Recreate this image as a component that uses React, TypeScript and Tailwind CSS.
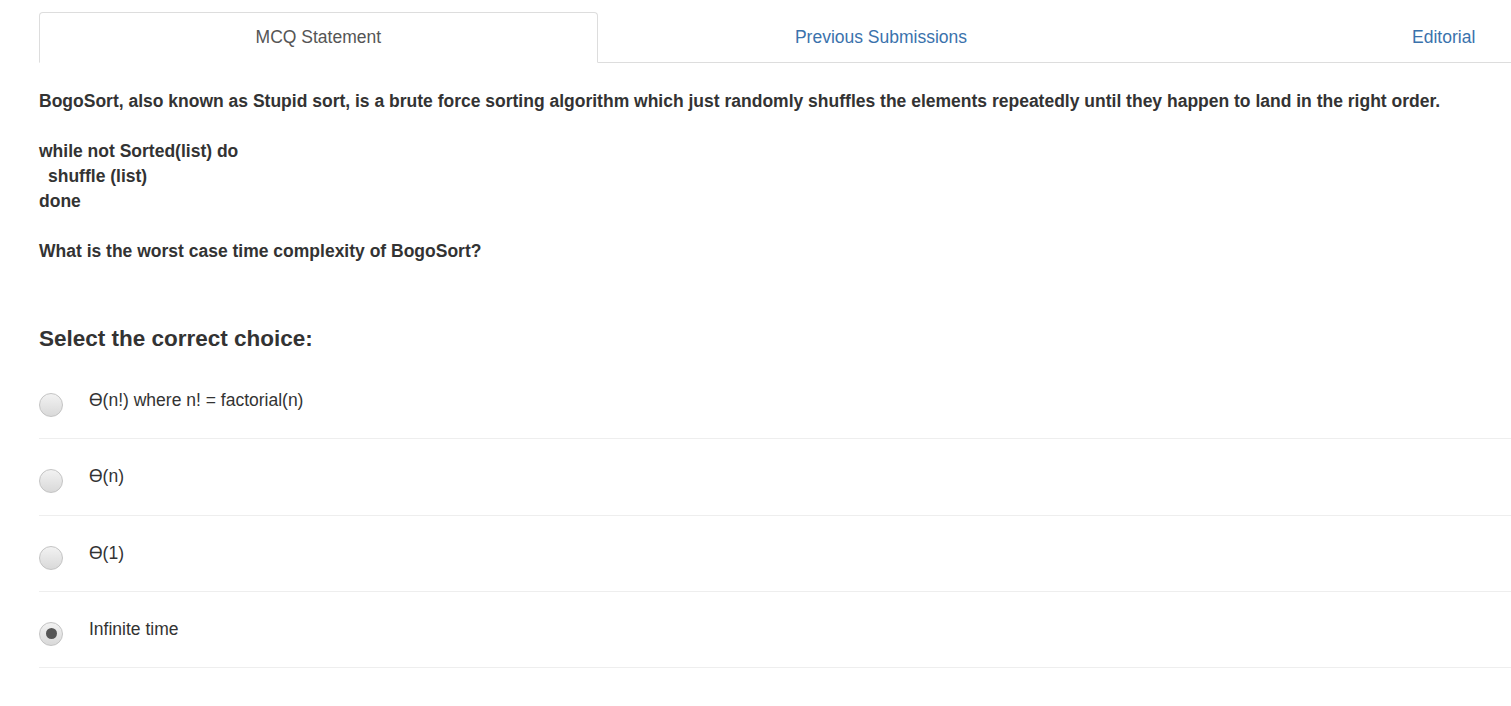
const options = [
  { label: 'ϴ(n!) where n! = factorial(n)', checked: false },
  { label: 'ϴ(n)', checked: false },
  { label: 'ϴ(1)', checked: false },
  { label: 'Infinite time', checked: true },
];

const tabs = ['MCQ Statement', 'Previous Submissions', 'Editorial'];

function Radio({ checked }: { checked: boolean }) {
  return (
    <span className="w-6 h-6 rounded-full border border-[#c4c4c4] bg-gradient-to-b from-[#f2f2f2] to-[#d9d9d9] flex items-center justify-center shrink-0 mt-[5px]">
      {checked && <span className="w-[11px] h-[11px] rounded-full bg-[#555]" />}
    </span>
  );
}

export default function App() {
  return (
    <div className="w-[1511px] h-[706px] overflow-hidden bg-white font-['Liberation_Sans',Arial,sans-serif] text-[#333]">
      <div className="w-[1688px] ml-[39px] pt-3">
        {/* Tabs */}
        <div className="flex border-b border-[#ddd]">
          {tabs.map((t, i) => (
            <div key={t} className="flex-1 -mb-px">
              <div
                className={
                  i === 0
                    ? 'mr-[4px] h-[51px] pb-px flex items-center justify-center text-[17.5px] text-[#555] bg-white border border-[#ddd] border-b-white rounded-t'
                    : 'mr-[4px] h-[51px] pb-px flex items-center justify-center text-[17.5px] text-[#3a72ac]'
                }
              >
                {t}
              </div>
            </div>
          ))}
        </div>

        {/* Statement */}
        <div className="mt-[26px] text-[17.5px] leading-[25px] font-bold">
          <p>
            BogoSort, also known as Stupid sort, is a brute force sorting algorithm which just randomly shuffles the
            elements repeatedly until they happen to land in the right order.
          </p>
          <p className="mt-[25px]">while not Sorted(list) do</p>
          <p className="pl-[9px]">shuffle (list)</p>
          <p>done</p>
          <p className="mt-[25px]">What is the worst case time complexity of BogoSort?</p>
        </div>

        <h3 className="mt-[63px] text-[22.5px] leading-[24px] font-bold">Select the correct choice:</h3>

        {/* Choices */}
        <div className="mt-3">
          {options.map((o) => (
            <div key={o.label} className="h-[76.3px] border-b border-[#eee] flex items-start pt-[25px] gap-[26px]">
              <Radio checked={o.checked} />
              <span className="text-[17.5px] leading-[25px]">{o.label}</span>
            </div>
          ))}
        </div>
      </div>
    </div>
  );
}
